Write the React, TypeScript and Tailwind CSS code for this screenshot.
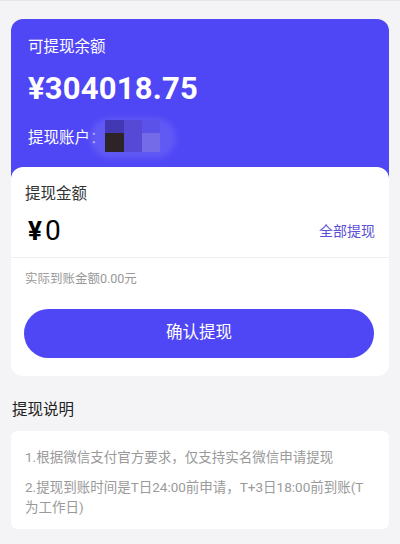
export default function App() {
  return (
    <div
      className="min-h-[544px] w-[400px] bg-[#f4f4f6] border-t border-[#e6e6e6] pt-[18px]"
      style={{ fontFamily: 'Roboto, "Noto Sans CJK SC", sans-serif' }}
    >
      <div className="mx-[11px]">
        <div className="rounded-t-[12px] bg-[#4f46f6] px-[17px] pt-[16px] pb-[23px] text-white">
          <div className="text-[15.5px] leading-[24px]">可提现余额</div>
          <div className="mt-[13px] text-[31px] font-bold leading-[34px] tracking-[0.2px]">¥304018.75</div>
          <div className="mt-[12px] flex items-center text-[15.5px] leading-[24px]">
            <span>提现账户：</span>
            <div className="relative h-[40px] w-[86px] -ml-[16px]">
              <div className="absolute inset-0 rounded-full bg-[#6a62f4] opacity-70 blur-[3px]" />
              <div className="absolute left-[15px] top-[2px] h-[13px] w-[19px] bg-[#4338b4]" />
              <div className="absolute left-[15px] top-[15px] h-[19px] w-[19px] bg-[#2d2428]" />
              <div className="absolute left-[34px] top-[2px] h-[32px] w-[18px] bg-[#5649d6]" />
              <div className="absolute left-[52px] top-[2px] h-[13px] w-[18px] bg-[#5b52ea]" />
              <div className="absolute left-[52px] top-[15px] h-[19px] w-[18px] bg-[#736be8]" />
            </div>
          </div>
        </div>
        <div className="-mt-[14px] relative rounded-[12px] bg-white pb-[18px]">
          <div className="px-[14px] pt-[16px] text-[15.5px] leading-[22px] text-[#333]">提现金额</div>
          <div className="flex h-[53px] items-center justify-between border-b border-[#f0f0f0] pl-[17px] pr-[14px]">
            <div className="flex items-center text-black">
              <span className="text-[26px] font-bold leading-none">¥</span>
              <span className="ml-[3px] text-[28px] leading-none">0</span>
            </div>
            <span className="text-[14px] text-[#5b50d6]">全部提现</span>
          </div>
          <div className="px-[14px] pt-[11px] text-[12.5px] leading-[20px] text-[#999]">实际到账金额0.00元</div>
          <button className="mx-[13px] mt-[20px] flex h-[49px] w-[350px] items-center justify-center rounded-full bg-[#4f46f6] text-[16.5px] text-white">
            确认提现
          </button>
        </div>
      </div>
      <div className="px-[12px] pt-[23px] text-[15.5px] leading-[22px] text-[#222]">提现说明</div>
      <div className="mx-[11px] mt-[10px] rounded-[6px] bg-white pl-[14px] pr-[15px] pt-[16px] pb-[12px] text-[13.5px] leading-[20px] text-[#9a9a9a]">
        <p>1.根据微信支付官方要求，仅支持实名微信申请提现</p>
        <p className="mt-[10px]">2.提现到账时间是T日24:00前申请，T+3日18:00前到账(T为工作日)</p>
      </div>
    </div>
  )
}
